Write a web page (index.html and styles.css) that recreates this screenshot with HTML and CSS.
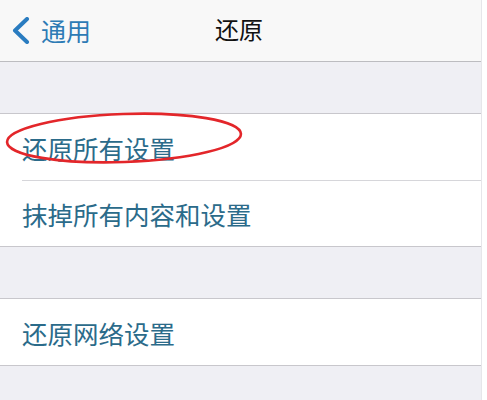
FILE: index.html
```html
<!DOCTYPE html>
<html lang="zh-CN">
<head>
  <meta charset="UTF-8" />
  <title>还原</title>
  <link rel="stylesheet" href="styles.css">
</head>
<body>
  <div class="screen">
    <div class="nav">
      <div class="back">
        <svg class="chevron" width="19" height="27" viewBox="0 0 19 27">
          <path d="M16 2 L4 13.5 L16 25" fill="none" stroke="#2a7cc0" stroke-width="4" stroke-linecap="round" stroke-linejoin="round"/>
        </svg>
        <span>通用</span>
      </div>
      <div class="title">还原</div>
    </div>

    <div class="spacer"></div>

    <div class="group">
      <div class="row highlighted">
        还原所有设置
        <svg class="mark" width="244" height="56" viewBox="0 0 244 56">
          <ellipse cx="122" cy="26" rx="117" ry="24" transform="rotate(-2 122 26)" fill="none" stroke="#e3262a" stroke-width="2.6"/>
        </svg>
      </div>
      <div class="row">抹掉所有内容和设置</div>
    </div>

    <div class="spacer"></div>

    <div class="group">
      <div class="row">还原网络设置</div>
    </div>

    <div class="spacer fill"></div>
  </div>
</body>
</html>
```

FILE: styles.css
```css
* {
  box-sizing: border-box;
  margin: 0;
  padding: 0;
}
body {
  background-color: #fff;
  font-family: "Noto Sans CJK SC", sans-serif;
  width: 487px;
  height: 400px;
  overflow: hidden;
}
.screen {
  width: 482px;
  height: 400px;
  border-right: 1px solid #e6e6ea;
  background-color: #efeff4;
  display: flex;
  flex-direction: column;
}
.nav {
  height: 62px;
  background-color: #f8f8f8;
  border-bottom: 1px solid #bcbcc0;
  position: relative;
  display: flex;
  align-items: center;
  justify-content: center;
}
.back {
  position: absolute;
  left: 11px;
  top: 16px;
  display: flex;
  align-items: center;
  gap: 11px;
  color: #2d7bb5;
  font-size: 25px;
  line-height: 28px;
}
.title {
  font-size: 24px;
  color: #111;
  margin-left: -3px;
  padding-bottom: 4px;
}
.spacer {
  height: 52px;
  border-bottom: 1px solid #c8c7cc;
}
.spacer.fill {
  flex: 1;
  border-bottom: none;
}
.group {
  background-color: #fff;
  border-bottom: 1px solid #c8c7cc;
}
.row {
  height: 66px;
  display: flex;
  align-items: center;
  padding-left: 22px;
  font-size: 25.5px;
  color: #2b6b8a;
  position: relative;
}
.row + .row::before {
  content: "";
  position: absolute;
  left: 22px;
  right: 0;
  top: 0;
  border-top: 1px solid #d6d6da;
}
.mark {
  position: absolute;
  left: 2px;
  top: -2px;
}
```
